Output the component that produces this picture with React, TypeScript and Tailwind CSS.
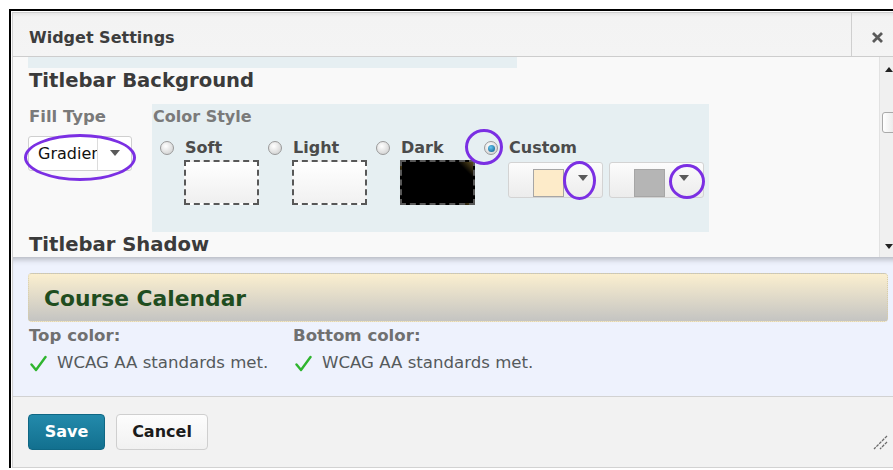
import React from "react";

type OptionProps = {
  label: string;
  checked?: boolean;
  children: React.ReactNode;
};

function Radio({ checked }: { checked?: boolean }) {
  return (
    <span className="flex h-[14px] w-[14px] shrink-0 items-center justify-center rounded-full border border-[#9a9a9a] bg-[radial-gradient(circle_at_40%_35%,#ffffff,#c9c9c9)]">
      {checked && (
        <span className="h-[7px] w-[7px] rounded-full bg-[radial-gradient(circle_at_40%_35%,#63c6f2,#0a5a84)]" />
      )}
    </span>
  );
}

function Ring({ className }: { className: string }) {
  return (
    <span
      className={`pointer-events-none absolute rounded-[50%] border-[3px] border-[#7b2fe3] ${className}`}
    />
  );
}

function Caret() {
  return (
    <span className="h-0 w-0 border-x-[5px] border-t-[6px] border-x-transparent border-t-[#5a5a5a]" />
  );
}

function StyleOption({ label, checked, children }: OptionProps) {
  return (
    <div className="flex w-[108px] shrink-0 items-start">
      <div className="relative flex h-[20px] w-[25px] shrink-0 items-center">
        <Radio checked={checked} />
        {checked && <Ring className="left-[-19px] top-[-9px] h-[36px] w-[38px]" />}
      </div>
      <div className="flex shrink-0 flex-col">
        <span className="h-[20px] text-[16px] font-bold leading-[20px] text-[#4b4b4b]">
          {label}
        </span>
        {children}
      </div>
    </div>
  );
}

function Swatch({ fill }: { fill: string }) {
  return <div className={`-ml-px mt-[2px] h-[45px] w-[75px] border-2 border-dashed border-[#585858] ${fill}`} />;
}

function ColorDrop({ color, ring }: { color: string; ring: string }) {
  return (
    <div className="relative flex h-[36px] w-[95px] items-stretch rounded-[3px] border border-[#d3d3d3] bg-[linear-gradient(#fcfcfc,#ececec)]">
      <div className={`ml-[24px] mt-[6px] h-[28px] w-[31px] border border-[#a6a6a6] ${color}`} />
      <div className="flex flex-1 items-center justify-center pb-[4px]">
        <Caret />
      </div>
      <Ring className={ring} />
    </div>
  );
}

function Check() {
  return (
    <svg width="17" height="17" viewBox="0 0 17 17" className="shrink-0">
      <path d="M1.5 9.5 L6 15 L15.5 2" fill="none" stroke="#2fb52f" strokeWidth="2.4" strokeLinecap="round" strokeLinejoin="round" />
    </svg>
  );
}

export default function App() {
  return (
    <div className="h-[470px] w-[893px] overflow-hidden bg-white font-['DejaVu_Sans',Verdana,sans-serif]">
      {/* outer frame */}
      <div className="ml-[9px] mt-[9px] w-[900px] border-l-2 border-t-2 border-black pl-px pt-px">
        <div className="w-[892px] border-l border-t border-[#cfcfcf]">
          {/* header */}
          <div className="flex h-[44px] border-b border-[#cdcdcd] bg-[linear-gradient(#e6e6e6_0px,#f3f3f3_4px,#f4f4f4)]">
            <div className="flex-1 pl-[16px] pt-[15px] text-[16px] font-bold leading-[20px] text-[#3d3d3d]">
              Widget Settings
            </div>
            <div className="flex w-[53px] items-center justify-center border-l border-[#cfcfcf] pr-[1px] pt-[5px]">
              <svg width="13" height="13" viewBox="0 0 13 13">
                <path d="M2 2 L11 11 M11 2 L2 11" stroke="#5a5a5a" strokeWidth="2.8" />
              </svg>
            </div>
          </div>

          {/* scrolling settings */}
          <div className="flex h-[200px]">
            <div className="w-[866px] overflow-hidden bg-[#f9f9f9] pl-[15px]">
              <div className="h-[11px] w-[489px] bg-[#e6eff2]" />
              <div className="mt-px pl-px text-[19.6px] font-bold leading-[24px] text-[#3b3b3b]">
                Titlebar Background
              </div>

              <div className="mt-[11px] flex items-start">
                <div className="w-[124px] pl-px">
                  <div className="pt-[3px] text-[16.5px] font-bold leading-[20px] text-[#7a7a7a]">
                    Fill Type
                  </div>
                  <div className="relative mt-[9px] flex h-[35px] w-[104px] -translate-x-px rounded-[3px] border border-[#cfcfcf] bg-white">
                    <div className="w-[68px] overflow-hidden whitespace-nowrap pl-[9px] text-[16px] leading-[33px] text-[#111]">
                      Gradient
                    </div>
                    <div className="flex flex-1 items-center justify-center border-l border-[#dcdcdc] pb-[2px]">
                      <Caret />
                    </div>
                    <Ring className="left-[-5px] top-[-3px] h-[47px] w-[112px]" />
                  </div>
                </div>

                <div className="h-[128px] w-[557px] bg-[#e6eff2]">
                  <div className="pl-px pt-[3px] text-[16px] font-bold leading-[20px] text-[#7a7a7a]">
                    Color Style
                  </div>
                  <div className="mt-[11px] flex pl-[8px]">
                    <StyleOption label="Soft">
                      <Swatch fill="bg-[linear-gradient(#ffffff,#efefef)]" />
                    </StyleOption>
                    <StyleOption label="Light">
                      <Swatch fill="bg-[linear-gradient(#ffffff,#f1f1f1)]" />
                    </StyleOption>
                    <StyleOption label="Dark">
                      <Swatch fill="bg-[linear-gradient(225deg,#5e4d1e_0%,#000_14%)]" />
                    </StyleOption>
                    <StyleOption label="Custom" checked>
                      <div className="-ml-px mt-[4px] flex gap-[6px]">
                        <ColorDrop color="bg-[#fdebc9]" ring="left-[54px] top-[-2px] h-[39px] w-[33px]" />
                        <ColorDrop color="bg-[#b5b5b5]" ring="left-[59px] top-[1px] h-[35px] w-[36px]" />
                      </div>
                    </StyleOption>
                  </div>
                </div>
              </div>

              <div className="mt-px pl-px text-[19.6px] font-bold leading-[24px] text-[#3b3b3b]">
                Titlebar Shadow
              </div>
            </div>

            {/* scrollbar */}
            <div className="flex w-[18px] flex-col items-center border-l border-[#e2e2e2] bg-[#f0f0f0]">
              <span className="mt-[10px] h-0 w-0 border-x-[4px] border-b-[5px] border-x-transparent border-b-[#222]" />
              <div className="mt-[40px] h-[21px] w-[15px] self-end rounded-[3px] border border-[#a9a9a9] bg-[linear-gradient(90deg,#ffffff,#e6e6e6)]" />
              <div className="flex-1" />
              <span className="mb-[8px] h-0 w-0 border-x-[4px] border-t-[5px] border-x-transparent border-t-[#222]" />
            </div>
          </div>

          {/* preview */}
          <div className="h-[139px] bg-[#eef2fd] pl-[15px] pt-[16px] shadow-[inset_0_7px_6px_-5px_rgba(0,0,0,0.28)]">
            <div className="flex h-[49px] w-[860px] items-center rounded-[4px] border border-dotted border-[#d8cda8] bg-[linear-gradient(#fbefcf,#c4c4c2)] pl-[15px] pt-[3px] text-[21.8px] font-bold text-[#1f4d1f]">
              Course Calendar
            </div>
            <div className="mt-[4px] flex pl-px">
              <div className="w-[264px]">
                <div className="text-[16.6px] font-bold leading-[20px] text-[#707070]">Top color:</div>
                <div className="mt-[7px] flex h-[20px] items-center gap-[10px] pl-px text-[16.6px] text-[#555a5c]">
                  <Check />
                  <span>WCAG AA standards met.</span>
                </div>
              </div>
              <div>
                <div className="text-[16.6px] font-bold leading-[20px] text-[#707070]">Bottom color:</div>
                <div className="mt-[7px] flex h-[20px] items-center gap-[10px] pl-[2px] text-[16.6px] text-[#555a5c]">
                  <Check />
                  <span>WCAG AA standards met.</span>
                </div>
              </div>
            </div>
          </div>

          {/* footer */}
          <div className="flex h-[72px] items-start gap-[11px] border-y border-[#d2d2d2] bg-[#f2f2f2] pl-[15px] pt-[17px]">
            <button className="h-[36px] w-[77px] rounded-[4px] border border-[#0f6784] bg-[linear-gradient(#238aab,#12708f)] text-[16px] font-bold text-white">
              Save
            </button>
            <button className="h-[36px] w-[92px] rounded-[4px] border border-[#cfcfcf] bg-[linear-gradient(#fdfdfd,#f1f1f1)] text-[16px] font-bold text-[#1b1b1b]">
              Cancel
            </button>
            <div className="flex-1" />
            <svg width="15" height="15" viewBox="0 0 15 15" className="mr-[16px] mt-[21px]">
              <path d="M14 1 L1 14 M14 7 L7 14" stroke="#6a6a6a" strokeWidth="1.3" strokeDasharray="3 1" />
            </svg>
          </div>
        </div>
      </div>
    </div>
  );
}
